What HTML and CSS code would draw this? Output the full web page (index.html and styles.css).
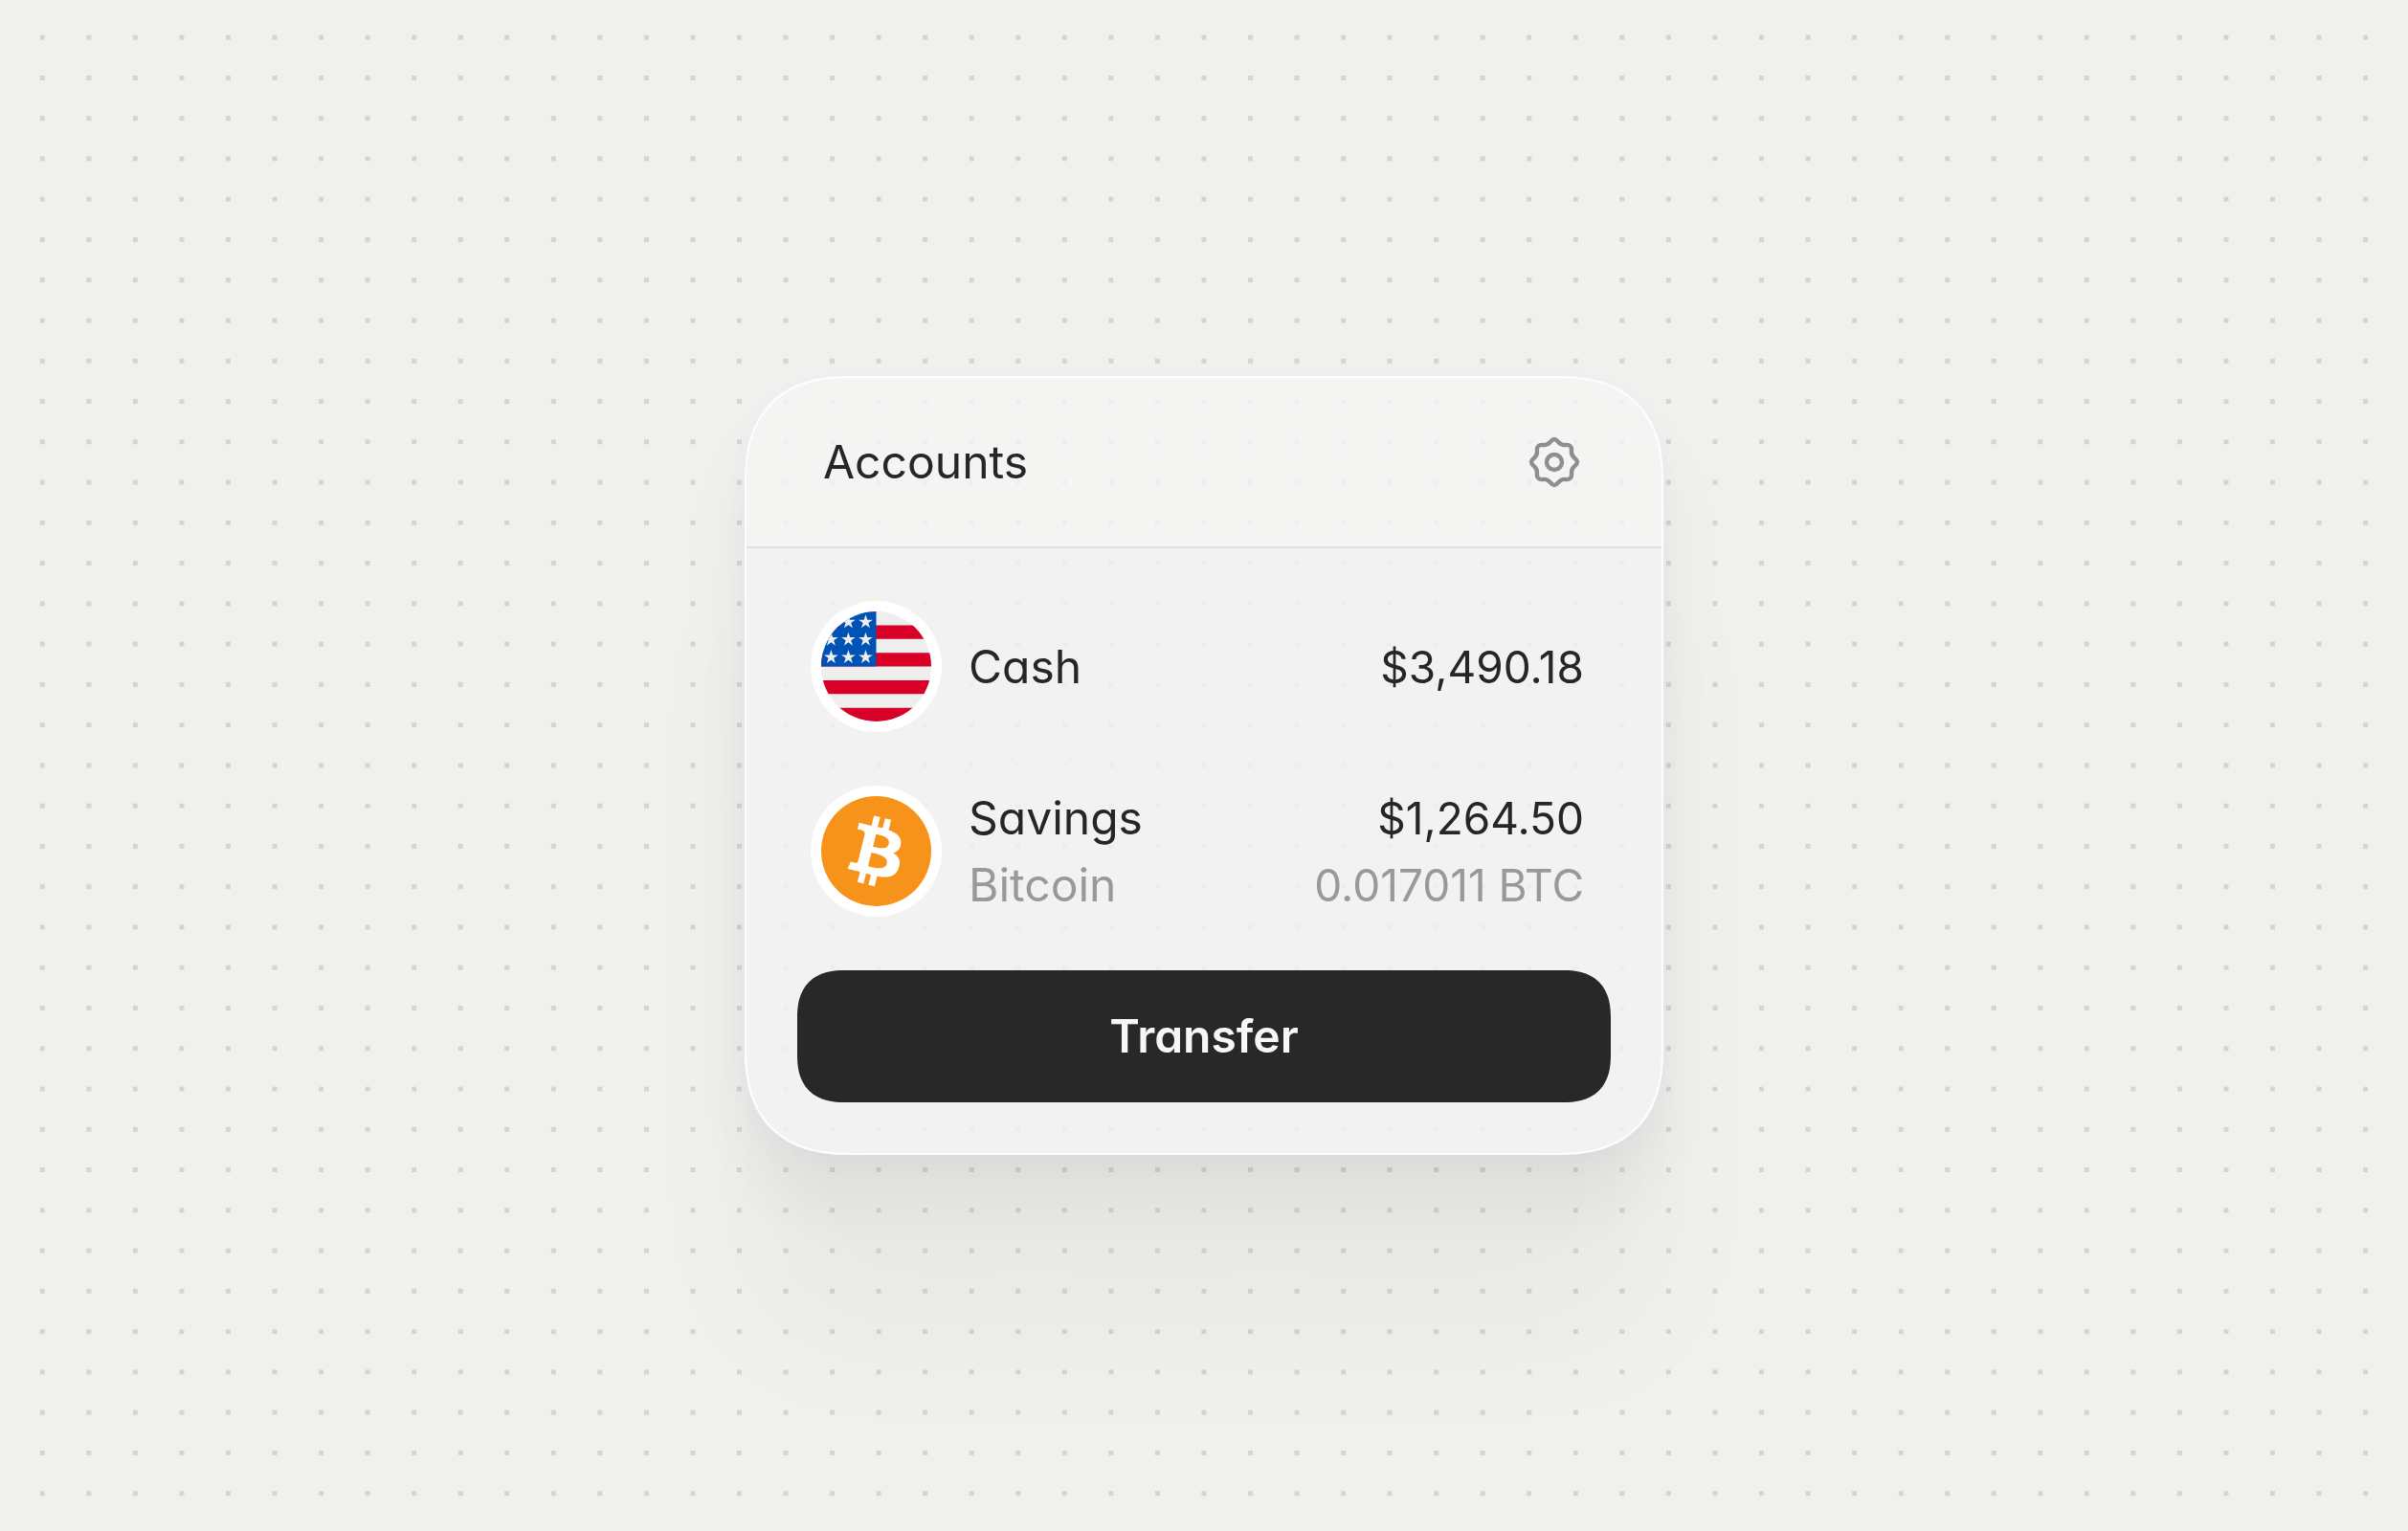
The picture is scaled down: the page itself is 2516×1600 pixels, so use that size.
FILE: index.html
```html
<!DOCTYPE html>
<html lang="en">
<head>
    <meta charset="UTF-8">
    <meta name="viewport" content="width=device-width, initial-scale=1.0">
    <title>Accounts</title>

    <link rel="stylesheet" href="styles.css">
</head>
<body>
    <div class="dots"></div>

    <main class="card">
        <header class="card-header">
            <h1>Accounts</h1>
            <button type="button" class="settings" aria-label="Settings">
                <svg viewBox="-96 -96 192 192" fill="none" stroke="currentColor" stroke-width="13">
                    <path d="M0-72C6-72 9-68 13-63C19-56 26-53 35-54C48-56 56-48 54-35C53-26 56-19 63-13C68-9 72-6 72 0C72 6 68 9 63 13C56 19 53 26 54 35C56 48 48 56 35 54C26 53 19 56 13 63C9 68 6 72 0 72C-6 72-9 68-13 63C-19 56-26 53-35 54C-48 56-56 48-54 35C-53 26-56 19-63 13C-68 9-72 6-72 0C-72-6-68-9-63-13C-56-19-53-26-54-35C-56-48-48-56-35-54C-26-53-19-56-13-63C-9-68-6-72 0-72Z"/>
                    <circle r="24"/>
                </svg>
            </button>
        </header>

        <div class="card-body">
            <ul class="accounts">
                <li class="account">
                    <span class="avatar">
                        <svg viewBox="0 0 344 344">
                            <defs>
                                <clipPath id="round"><circle cx="172" cy="172" r="172"/></clipPath>
                                <path id="star" d="M0-23L5.2-7.1H21.9L8.4 2.7L13.5 18.6L0 8.8L-13.5 18.6L-8.4 2.7L-21.9-7.1H-5.2Z"/>
                            </defs>
                            <g clip-path="url(#round)">
                                <rect width="344" height="344" fill="#eeeeee"/>
                                <path fill="#d80027" d="M0 43h344v43H0zM0 129h344v43H0zM0 215h344v43H0zM0 301h344v43H0z"/>
                                <rect width="172" height="172" fill="#0052b4"/>
                                <g fill="#eeeeee">
                                    <use href="#star" x="85" y="33"/>
                                    <use href="#star" x="139" y="33"/>
                                    <use href="#star" x="31" y="88"/>
                                    <use href="#star" x="85" y="88"/>
                                    <use href="#star" x="139" y="88"/>
                                    <use href="#star" x="31" y="143"/>
                                    <use href="#star" x="85" y="143"/>
                                    <use href="#star" x="139" y="143"/>
                                </g>
                            </g>
                        </svg>
                    </span>
                    <div class="name">
                        <p>Cash</p>
                    </div>
                    <div class="amount">
                        <p>$3,490.18</p>
                    </div>
                </li>
                <li class="account">
                    <span class="avatar">
                        <svg viewBox="0 0 32 32">
                            <circle cx="16" cy="16" r="16" fill="#f7931a"/>
                            <path fill="#fff" transform="translate(-.7 -.5) scale(1.03)" d="M23.189 14.02c.314-2.096-1.283-3.223-3.465-3.975l.708-2.84-1.728-.43-.69 2.765c-.454-.114-.92-.22-1.385-.326l.695-2.783L15.596 6l-.708 2.839c-.376-.086-.746-.17-1.104-.26l.002-.009-2.384-.595-.46 1.846s1.283.294 1.256.312c.7.175.826.638.805 1.006l-.806 3.235c.048.012.11.03.18.057l-.183-.045-1.13 4.532c-.086.212-.303.531-.793.41.018.025-1.256-.313-1.256-.313l-.858 1.978 2.25.561c.418.105.828.215 1.231.318l-.715 2.872 1.727.43.708-2.84c.472.127.93.245 1.378.357l-.706 2.828 1.728.43.715-2.866c2.948.558 5.164.333 6.097-2.333.752-2.146-.037-3.385-1.588-4.192 1.13-.26 1.98-1.003 2.207-2.538zm-3.95 5.538c-.533 2.147-4.148.986-5.32.695l.95-3.805c1.172.293 4.929.872 4.37 3.11zm.535-5.569c-.487 1.953-3.495.96-4.47.717l.86-3.45c.975.243 4.118.696 3.61 2.733z"/>
                        </svg>
                    </span>
                    <div class="name">
                        <p>Savings</p>
                        <p class="muted">Bitcoin</p>
                    </div>
                    <div class="amount">
                        <p>$1,264.50</p>
                        <p class="muted">0.017011 BTC</p>
                    </div>
                </li>
            </ul>

            <button type="button" class="transfer">Transfer</button>
        </div>
    </main>
</body>
</html>
```
FILE: styles.css
```css
* {
    margin: 0;
    padding: 0;
    box-sizing: border-box;
}

body {
    display: flex;
    align-items: center;
    justify-content: center;
    min-height: 100vh;
    padding: 40px;
    background-color: #f0f0ee;
    color: #262626;
    font-family: Inter, "Liberation Sans", sans-serif;
    font-feature-settings: "cv11";
    font-size: 48px;
    line-height: 70px;
}

/* dot grid: column stripes crossed with row stripes */
.dots {
    position: fixed;
    inset: 18px 20px;
    background-color: #d4d4d2;
    mask-image:
        linear-gradient(90deg, transparent 22px, #000 22px, #000 27px, transparent 27px),
        linear-gradient(transparent 19px, #000 19px, #000 24px, transparent 24px);
    mask-size: 48px 42px;
    mask-repeat: space;
    mask-composite: intersect;
}

.card {
    position: relative;
    width: 100%;
    max-width: 960px;
    overflow: hidden;
    border: 2px solid #fdfdfd;
    border-radius: 96px;
    background-color: rgba(242, 242, 243, 0.8);
    box-shadow:
        0 16px 40px rgba(0, 0, 0, 0.03),
        0 56px 80px rgba(0, 0, 0, 0.05),
        0 200px 140px rgba(0, 0, 0, 0.03);
}

.card-header {
    display: flex;
    align-items: center;
    justify-content: space-between;
    padding: 53px 80px;
    border-bottom: 2px solid #dddfde;
    background-color: rgba(255, 255, 255, 0.1);
}

h1 {
    font-size: 48px;
    font-weight: 400;
}

.settings {
    width: 64px;
    height: 64px;
    border: none;
    background: none;
    color: #8e8e8e;
    cursor: pointer;
}

.settings svg,
.avatar svg {
    display: block;
    width: 100%;
    height: 100%;
}

.card-body {
    display: flex;
    flex-direction: column;
    gap: 56px;
    padding: 55px 53px 53px;
}

.accounts {
    display: flex;
    flex-direction: column;
    gap: 56px;
    padding: 0 28px 0 14px;
    list-style: none;
}

.account {
    display: flex;
    align-items: center;
    height: 137px;
}

.avatar {
    width: 137px;
    height: 137px;
    padding: 11px;
    border-radius: 50%;
    background-color: #fff;
}

.name {
    flex-grow: 1;
    padding-left: 28px;
}

.amount {
    font-size: 46px;
    text-align: right;
}

.muted {
    color: #999999;
}

.transfer {
    height: 138px;
    border: none;
    border-radius: 42px;
    background-color: #282828;
    color: #f7f7f7;
    font: inherit;
    font-weight: 600;
    cursor: pointer;
}

/* smoother corners where the browser can draw them */
@supports (corner-shape: squircle) {
    .card {
        border-radius: 112px;
        corner-shape: superellipse(1.3);
    }

    .transfer {
        border-radius: 50px;
        corner-shape: superellipse(1.3);
    }
}
```
